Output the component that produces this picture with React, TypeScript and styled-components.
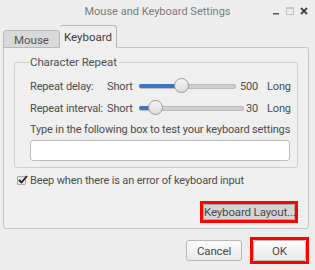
import React from 'react';
import styled, { createGlobalStyle } from 'styled-components';

const Global = createGlobalStyle`
  html, body { margin: 0; padding: 0; background: #ededed; }
  body { font-family: Roboto, "Liberation Sans", sans-serif; font-size: 11px; color: #4d4d4d; letter-spacing: -0.15px; }
`;

const Window = styled.div`
  width: 315px;
  height: 270px;
  background: #ededed;
  display: flex;
  flex-direction: column;
  overflow: hidden;
`;

const TitleBar = styled.div`
  height: 22px;
  display: grid;
  grid-template-columns: 1fr auto 1fr;
  align-items: center;
`;

const Title = styled.div`
  grid-column: 2;
  font-size: 11px;
  letter-spacing: 0;
  color: #7b7b7b;
`;

const Controls = styled.div`
  grid-column: 3;
  justify-self: end;
  display: flex;
  align-items: center;
  gap: 6px;
  padding-right: 7px;
`;

const Body = styled.div`
  flex: 1;
  display: flex;
  flex-direction: column;
  padding: 3px 6px 0 3px;
`;

const TabRow = styled.div`
  display: flex;
  align-items: flex-end;
  height: 22px;
  position: relative;
  z-index: 1;
`;

const Tab = styled.div<{ $active?: boolean }>`
  width: 57px;
  height: ${p => (p.$active ? 23 : 18)}px;
  box-sizing: border-box;
  display: flex;
  align-items: center;
  justify-content: center;
  font-size: 11.5px;
  letter-spacing: 0;
  color: ${p => (p.$active ? '#3c3c3c' : '#555')};
  background: ${p => (p.$active ? '#efefef' : '#d9d9d9')};
  border: 1px solid #b8b8b8;
  border-bottom: ${p => (p.$active ? '1px solid #efefef' : '1px solid #b8b8b8')};
  border-left: ${p => (p.$active ? 'none' : '1px solid #b8b8b8')};
  border-radius: 3px 3px 0 0;
  margin-bottom: -1px;
  padding-top: ${p => (p.$active ? 0 : 2)}px;
`;

const Panel = styled.div`
  height: 182px;
  box-sizing: border-box;
  border: 1px solid #c2c2c2;
  border-radius: 0 3px 3px 3px;
  background: #efefef;
  display: flex;
  flex-direction: column;
  padding: 7px 10px 5px 10px;
`;

const Frame = styled.fieldset`
  margin: 0;
  padding: 4px 5px 6px 15px;
  border: 1px solid #cdcdcd;
  border-radius: 3px;
  min-width: 0;
  display: flex;
  flex-direction: column;
`;

const Legend = styled.legend`
  padding: 0 2px 0 1px;
  margin-left: -1px;
  font-size: 11.5px;
  letter-spacing: -0.1px;
  color: #505050;
`;

const SliderGrid = styled.div`
  display: grid;
  grid-template-columns: 77px 32px 1fr 22px 34px;
  grid-auto-rows: 22px;
  align-items: center;
  padding-top: 2px;
`;

const Cell = styled.span<{ $right?: boolean }>`
  white-space: nowrap;
  text-align: ${p => (p.$right ? 'right' : 'left')};
`;

const LongCell = styled(Cell)`
  padding-left: 9px;
`;

const Track = styled.div<{ $end: number }>`
  height: 14px;
  position: relative;
  margin-right: ${p => p.$end}px;
  display: flex;
  align-items: center;
`;

const Rail = styled.div`
  flex: 1;
  height: 3px;
  background: #cfcfcf;
  border: 1px solid #b9b9b9;
  border-radius: 2px;
`;

const Fill = styled.div`
  position: absolute;
  left: 0;
  top: 5px;
  height: 4px;
  background: #3a75c9;
  border-radius: 2px;
`;

const Knob = styled.div`
  position: absolute;
  top: -1px;
  width: 15px;
  height: 15px;
  box-sizing: border-box;
  border-radius: 50%;
  border: 1px solid #9a9a9a;
  background: linear-gradient(#f4f4f4, #dcdcdc);
`;

const Hint = styled.div`
  margin-top: 4px;
  white-space: nowrap;
`;

const Entry = styled.div`
  height: 21px;
  box-sizing: border-box;
  margin: 4px 2px 0 0;
  border: 1px solid #bcbcbc;
  border-radius: 3px;
  background: #fff;
`;

const CheckRow = styled.label`
  display: flex;
  align-items: center;
  gap: 4px;
  margin: 6px 0 0 3px;
`;

const Check = styled.span`
  width: 9px;
  height: 9px;
  box-sizing: border-box;
  border: 1px solid #a8a8a8;
  border-radius: 1px;
  background: #e6e6e6;
  position: relative;
`;

const CheckMark = styled.svg`
  position: absolute;
  left: -1px;
  top: -3px;
`;

const ButtonRow = styled.div<{ $gap?: number }>`
  display: flex;
  justify-content: flex-end;
  gap: ${p => p.$gap ?? 0}px;
`;

const Marked = styled.div<{ $on?: boolean }>`
  border: 3px solid ${p => (p.$on ? '#ff0000' : 'transparent')};
  display: flex;
`;

const Button = styled.button<{ $flat?: boolean; $w: number }>`
  width: ${p => p.$w}px;
  height: ${p => (p.$flat ? 16 : 21)}px;
  box-sizing: border-box;
  font-family: Roboto, "Liberation Sans", sans-serif;
  font-size: 11.5px;
  letter-spacing: -0.15px;
  white-space: nowrap;
  color: #4a4a4a;
  padding: 0;
  border: 1px solid ${p => (p.$flat ? '#a9a9a9' : '#b9b9b9')};
  border-radius: ${p => (p.$flat ? 1 : 3)}px;
  background: ${p => (p.$flat ? '#d5d5d5' : 'linear-gradient(#fbfbfb, #e9e9e9)')};
`;

function Slider({ frac, end }: { frac: number; end: number }) {
  return (
    <Track $end={end}>
      <Rail />
      <Fill style={{ width: `calc(${frac} * (100% - 15px) + 7px)` }} />
      <Knob style={{ left: `calc(${frac} * (100% - 15px))` }} />
    </Track>
  );
}

export default function App() {
  return (
    <Window>
      <Global />
      <TitleBar>
        <Title>Mouse and Keyboard Settings</Title>
        <Controls>
          <svg width="8" height="8" viewBox="0 0 8 8"><rect x="1" y="6" width="6" height="1.5" fill="#555" /></svg>
          <svg width="8" height="8" viewBox="0 0 8 8"><rect x="0.5" y="0.5" width="7" height="7" fill="none" stroke="#c4c4c4" /><rect x="0.5" y="0.5" width="7" height="1.5" fill="#c4c4c4" /></svg>
          <svg width="8" height="8" viewBox="0 0 8 8"><path d="M1 1 L7 7 M7 1 L1 7" stroke="#444" strokeWidth="1.8" /></svg>
        </Controls>
      </TitleBar>
      <Body>
        <TabRow>
          <Tab>Mouse</Tab>
          <Tab $active>Keyboard</Tab>
        </TabRow>
        <Panel>
          <Frame>
            <Legend>Character Repeat</Legend>
            <SliderGrid>
              <Cell>Repeat delay:</Cell>
              <Cell>Short</Cell>
              <Slider frac={0.43} end={0} />
              <Cell $right>500</Cell>
              <LongCell>Long</LongCell>
              <Cell>Repeat interval:</Cell>
              <Cell>Short</Cell>
              <Slider frac={0.1} end={-8} />
              <Cell $right>30</Cell>
              <LongCell>Long</LongCell>
            </SliderGrid>
            <Hint>Type in the following box to test your keyboard settings</Hint>
            <Entry />
          </Frame>
          <CheckRow>
            <Check>
              <CheckMark width="11" height="11" viewBox="0 0 11 11"><path d="M2 6 L4.5 8.5 L10 2" fill="none" stroke="#222" strokeWidth="1.8" /></CheckMark>
            </Check>
            Beep when there is an error of keyboard input
          </CheckRow>
          <ButtonRow style={{ marginTop: 'auto' }}>
            <Marked $on>
              <Button $flat $w={92}>Keyboard Layout...</Button>
            </Marked>
          </ButtonRow>
        </Panel>
        <ButtonRow $gap={5} style={{ marginTop: 8 }}>
          <Marked>
            <Button $w={56}>Cancel</Button>
          </Marked>
          <Marked $on>
            <Button $w={53}>OK</Button>
          </Marked>
        </ButtonRow>
      </Body>
    </Window>
  );
}
